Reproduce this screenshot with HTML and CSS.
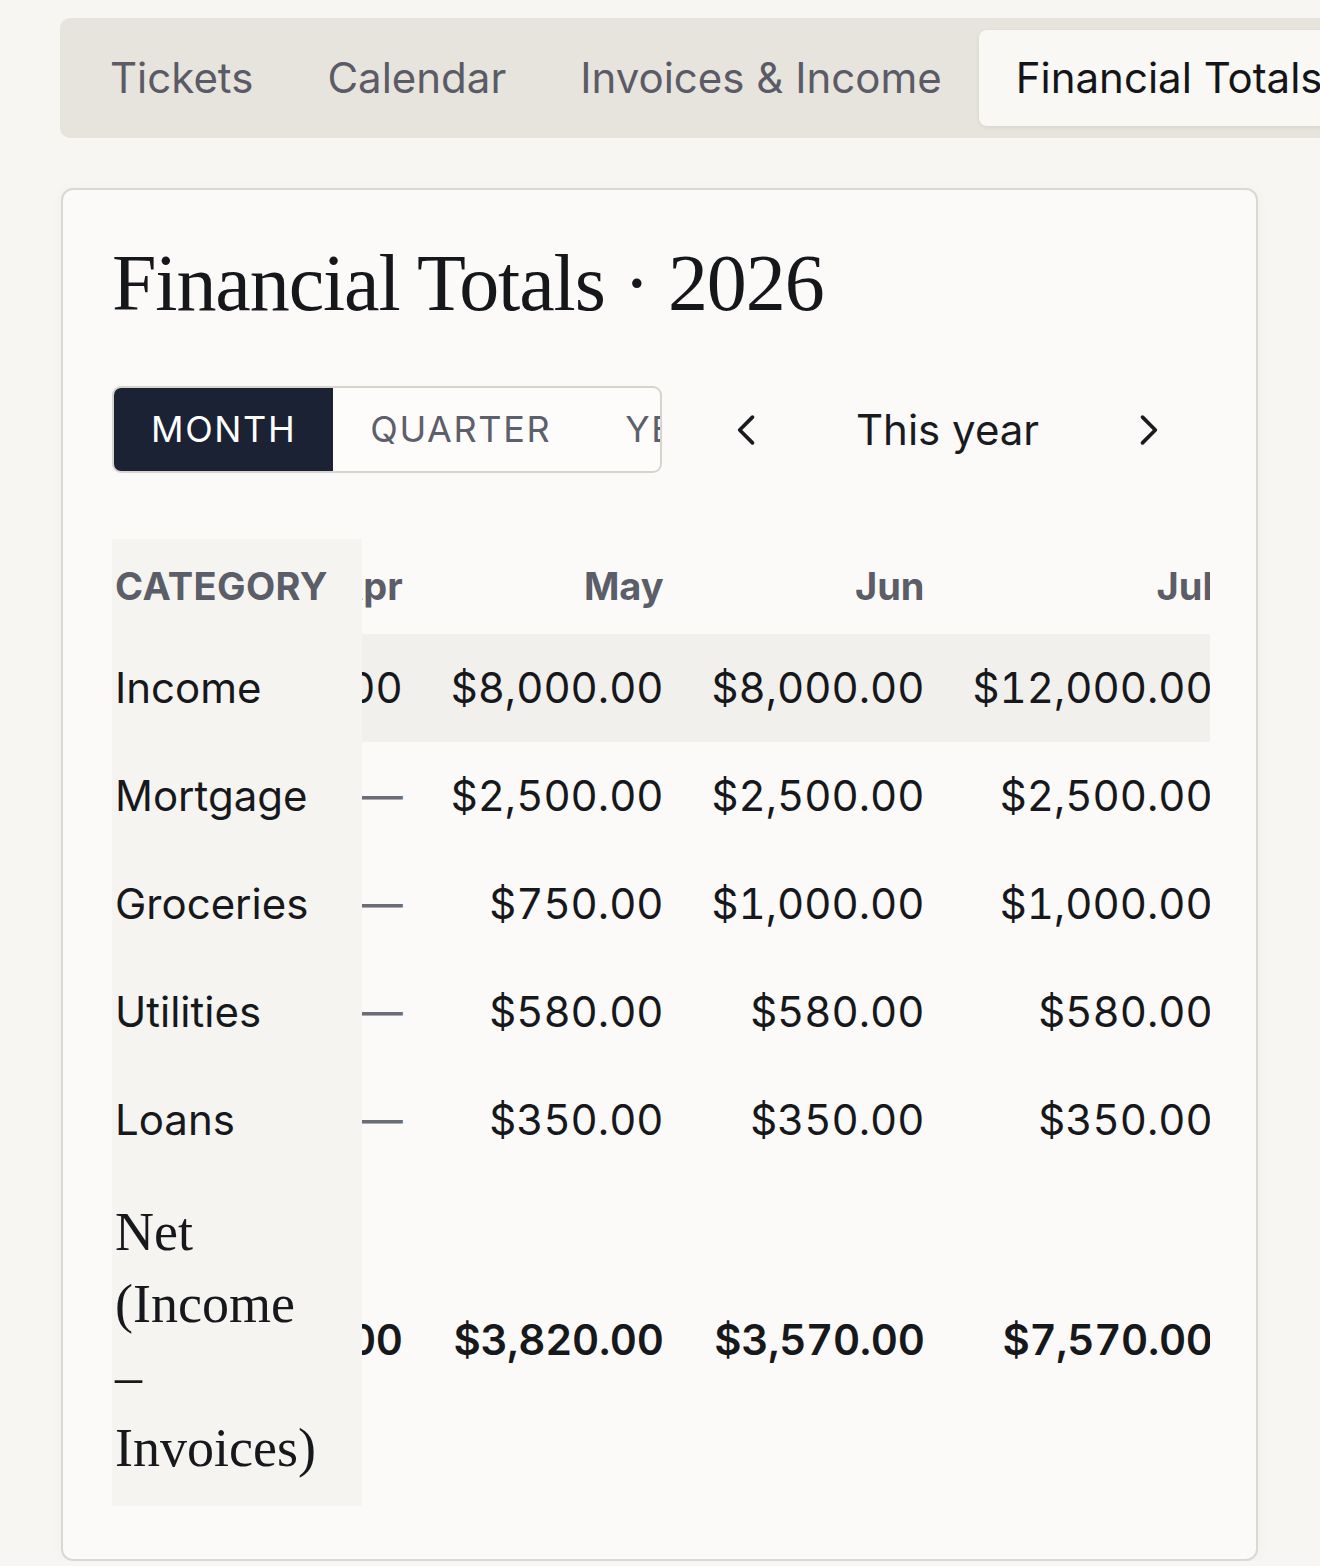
FILE: index.html
```html
<!DOCTYPE html>
<html lang="en">
<head>
<meta charset="utf-8">
<title>Financial Totals</title>
<link rel="stylesheet" href="styles.css">
</head>
<body>
<div class="page">
  <nav class="tabs">
    <a class="tab">Tickets</a>
    <a class="tab">Calendar</a>
    <a class="tab">Invoices &amp; Income</a>
    <a class="tab tab-active">Financial Totals</a>
    <a class="tab">Settings</a>
  </nav>

  <section class="card">
    <h1 class="title">Financial Totals · 2026</h1>

    <div class="controls">
      <div class="segmented">
        <button class="seg seg-active">Month</button>
        <button class="seg">Quarter</button>
        <button class="seg">Year</button>
      </div>
      <div class="period">
        <button class="nav-btn" aria-label="Previous">
          <svg viewBox="0 0 24 24" width="44" height="44"><path d="M15 5 8 12l7 7" fill="none" stroke="currentColor" stroke-width="2" stroke-linecap="round" stroke-linejoin="round"/></svg>
        </button>
        <span class="period-label">This year</span>
        <button class="nav-btn" aria-label="Next">
          <svg viewBox="0 0 24 24" width="44" height="44"><path d="M9 5l7 7-7 7" fill="none" stroke="currentColor" stroke-width="2" stroke-linecap="round" stroke-linejoin="round"/></svg>
        </button>
      </div>
    </div>

    <div class="table-scroll">
      <table class="totals">
        <thead>
          <tr>
            <th class="cat cat-head">Category</th>
            <th>Jan</th><th>Feb</th><th>Mar</th><th>Apr</th>
            <th class="may">May</th><th>Jun</th><th>Jul</th><th>Aug</th>
            <th>Sep</th><th>Oct</th><th>Nov</th><th>Dec</th>
          </tr>
        </thead>
        <tbody>
          <tr class="row-hl">
            <th class="cat">Income</th>
            <td>$4,000.00</td><td>$4,000.00</td><td>$4,000.00</td><td>$4,000.00</td>
            <td>$8,000.00</td><td>$8,000.00</td><td>$12,000.00</td><td>$8,000.00</td>
            <td>$8,000.00</td><td>$8,000.00</td><td>$8,000.00</td><td>$8,000.00</td>
          </tr>
          <tr>
            <th class="cat">Mortgage</th>
            <td class="nil">—</td><td class="nil">—</td><td class="nil">—</td><td class="nil">—</td>
            <td>$2,500.00</td><td>$2,500.00</td><td>$2,500.00</td><td>$2,500.00</td>
            <td>$2,500.00</td><td>$2,500.00</td><td>$2,500.00</td><td>$2,500.00</td>
          </tr>
          <tr>
            <th class="cat">Groceries</th>
            <td class="nil">—</td><td class="nil">—</td><td class="nil">—</td><td class="nil">—</td>
            <td>$750.00</td><td>$1,000.00</td><td>$1,000.00</td><td>$1,000.00</td>
            <td>$1,000.00</td><td>$1,000.00</td><td>$1,000.00</td><td>$1,000.00</td>
          </tr>
          <tr>
            <th class="cat">Utilities</th>
            <td class="nil">—</td><td class="nil">—</td><td class="nil">—</td><td class="nil">—</td>
            <td>$580.00</td><td>$580.00</td><td>$580.00</td><td>$580.00</td>
            <td>$580.00</td><td>$580.00</td><td>$580.00</td><td>$580.00</td>
          </tr>
          <tr>
            <th class="cat">Loans</th>
            <td class="nil">—</td><td class="nil">—</td><td class="nil">—</td><td class="nil">—</td>
            <td>$350.00</td><td>$350.00</td><td>$350.00</td><td>$350.00</td>
            <td>$350.00</td><td>$350.00</td><td>$350.00</td><td>$350.00</td>
          </tr>
          <tr class="row-net">
            <th class="cat cat-net">Net (Income – Invoices)</th>
            <td>$4,000.00</td><td>$4,000.00</td><td>$4,000.00</td><td>$4,000.00</td>
            <td>$3,820.00</td><td>$3,570.00</td><td>$7,570.00</td><td>$3,570.00</td>
            <td>$3,570.00</td><td>$3,570.00</td><td>$3,570.00</td><td>$3,570.00</td>
          </tr>
        </tbody>
      </table>
    </div>
  </section>
</div>
<script src="app.js"></script>
</body>
</html>
```

FILE: styles.css
```css
* { box-sizing: border-box; }

html, body { margin: 0; }

body {
  background: #f7f6f2;
  font-family: Inter, "Noto Sans", "Liberation Sans", sans-serif;
  color: #17181c;
  overflow: hidden;
}

.page {
  width: 1320px;
  padding: 18px 0 0 60px;
}

/* Tabs */
.tabs {
  display: flex;
  width: max-content;
  padding: 12px 12px 12px 13px;
  background: #e6e4dc;
  border-radius: 10px;
}

.tab {
  padding: 15px 37px;
  font-size: 42px;
  line-height: 66px;
  color: #5a5b66;
  border-radius: 8px;
  white-space: nowrap;
}

.tab-active {
  background: #f9f8f4;
  color: #141519;
  box-shadow: 0 1px 4px rgba(0, 0, 0, 0.08);
}

/* Card */
.card {
  width: 1197px;
  margin: 50px 0 0 1px;
  padding: 45px 46px 53px 49px;
  background: #fbfaf8;
  border: 2px solid #dad8d1;
  border-radius: 12px;
  box-shadow: 0 2px 14px rgba(0, 0, 0, 0.03);
}

.title {
  margin: 0;
  font-family: "Liberation Serif", "DejaVu Serif", serif;
  font-weight: 400;
  font-size: 80px;
  line-height: 96px;
  letter-spacing: -0.014em;
  color: #16171b;
}

/* Controls */
.controls {
  display: flex;
  align-items: center;
  margin-top: 55px;
}

.segmented {
  display: flex;
  width: 550px;
  height: 87px;
  border: 2px solid #d6d4cd;
  border-radius: 9px;
  overflow: hidden;
  background: #fdfcfa;
}

.seg {
  flex-shrink: 0;
  margin: 0;
  padding: 0 37px;
  border: 0;
  background: transparent;
  font-family: inherit;
  font-size: 36px;
  line-height: 83px;
  letter-spacing: 0.045em;
  text-transform: uppercase;
  color: #5d5f6a;
  white-space: nowrap;
}

.seg-active {
  background: #1b2234;
  color: #ffffff;
}

.period {
  display: flex;
  align-items: center;
  margin-left: 55px;
}

.nav-btn {
  display: flex;
  align-items: center;
  justify-content: center;
  width: 60px;
  height: 60px;
  padding: 0;
  border: 0;
  background: transparent;
  color: #1a1b1f;
}

.period-label {
  padding: 0 79px;
  font-size: 42px;
  line-height: 60px;
  color: #1a1b1f;
  white-space: nowrap;
}

/* Table */
.table-scroll {
  margin-top: 66px;
  overflow-x: auto;
  scrollbar-width: none;
}

.table-scroll::-webkit-scrollbar { display: none; }

.totals {
  border-collapse: separate;
  border-spacing: 0;
}

.totals th,
.totals td {
  padding: 22px 24px;
  text-align: right;
  white-space: nowrap;
}

.totals thead th {
  font-size: 38px;
  line-height: 51px;
  font-weight: 700;
  color: #5b5d68;
}

.totals tbody td {
  font-size: 42px;
  line-height: 64px;
  font-weight: 400;
  font-variant-numeric: tabular-nums;
  color: #17181c;
}

.totals tbody th {
  font-size: 42px;
  line-height: 64px;
  font-weight: 400;
  color: #17181c;
}

.totals .cat {
  position: sticky;
  left: 0;
  z-index: 1;
  width: 250px;
  min-width: 250px;
  max-width: 250px;
  padding-left: 3px;
  text-align: left;
  background: #f5f4f0;
}

.totals .cat-head {
  text-transform: uppercase;
  letter-spacing: 0.01em;
}

.totals td.nil { color: #6b6d75; }

.totals .row-hl td { background: #f1f0ec; }

.totals .cat-net {
  white-space: normal;
  padding-right: 46px;
  font-family: "Liberation Serif", "DejaVu Serif", serif;
  font-size: 54px;
  line-height: 72px;
}

.totals .row-net td {
  font-weight: 600;
  letter-spacing: -0.3px;
  vertical-align: middle;
}
```

FILE: app.js
```js
(function () {
  var wrap = document.querySelector('.table-scroll');
  var may = document.querySelector('.totals th.may');
  if (!wrap || !may) return;
  var offset = may.getBoundingClientRect().right - wrap.getBoundingClientRect().left;
  wrap.scrollLeft = offset - 576;
})();
```
